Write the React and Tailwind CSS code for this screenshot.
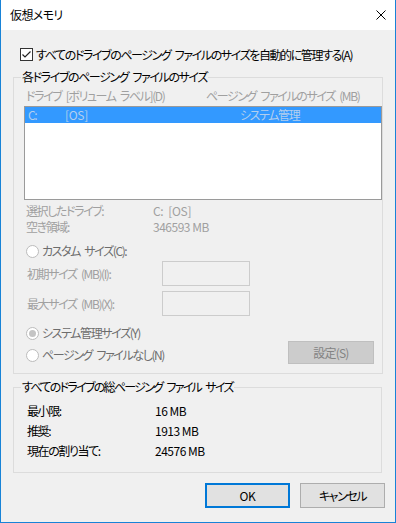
import React from 'react';

const Radio = ({ checked }) => (
  <span className="w-[13px] h-[13px] shrink-0 rounded-full border border-[#bcbcbc] bg-white flex items-center justify-center">
    {checked && <span className="w-[7px] h-[7px] rounded-full bg-[#c4c4c4]" />}
  </span>
);

const App = () => {
  return (
    <div className="w-[396px] h-[523px] flex flex-col bg-[#f0f0f0] border-x border-b border-[#1883d7] text-[12px] leading-[16px] tracking-[-1.4px] [word-spacing:3px] text-black font-['Noto_Sans_CJK_JP',sans-serif] [font-feature-settings:'palt']">
      {/* タイトルバー */}
      <div className="h-[30px] shrink-0 bg-white flex items-center justify-between pl-[9px] pr-[9px]">
        <span className="tracking-[-0.6px]">仮想メモリ</span>
        <svg width="10" height="10" viewBox="0 0 10 10">
          <path d="M0.5 0.5 L9.5 9.5 M9.5 0.5 L0.5 9.5" stroke="#000" strokeWidth="1" fill="none" />
        </svg>
      </div>

      <div className="flex flex-col px-[12px] pt-[18px]">
        <div className="h-[13px] flex items-center gap-[3px] pl-[7px]">
          <span className="w-[13px] h-[13px] shrink-0 border border-[#333333] bg-white flex items-center justify-center">
            <svg width="11" height="11" viewBox="0 0 11 11">
              <path d="M1.5 5.5 L4 8 L9.5 2.5" stroke="#222" strokeWidth="1.2" fill="none" />
            </svg>
          </span>
          <span className="whitespace-nowrap">すべてのドライブのページング ファイルのサイズを自動的に管理する(A)</span>
        </div>

        {/* 各ドライブ */}
        <fieldset className="mt-[8px] w-[369px] border border-[#dcdcdc] pb-[9px]">
          <legend className="ml-[7px] px-[1px] leading-[16px]">各ドライブのページング ファイルのサイズ</legend>
          <div className="flex flex-col pl-[10px] text-[#a0a0a0]">
            <div className="mt-[3px] h-[16px] flex pl-[2px] whitespace-nowrap">
              <span className="w-[180px]">ドライブ [ボリューム ラベル](D)</span>
              <span>ページング ファイルのサイズ (MB)</span>
            </div>
            <div className="mt-[2px] w-[358px] h-[94px] border border-[#9a9a9a] bg-white">
              <div className="h-[16px] bg-[#3399ff] flex items-center pl-[3px] text-[#b3cfee]">
                <span className="w-[37px]">C:</span>
                <span className="w-[175px] tracking-[-0.3px]">[OS]</span>
                <span>システム管理</span>
              </div>
            </div>
            <div className="mt-[3px] h-[16px] flex pl-[2px]">
              <span className="w-[127px]">選択したドライブ:</span>
              <span className="tracking-[-0.3px] [word-spacing:0px]">C:&nbsp;&nbsp;[OS]</span>
            </div>
            <div className="h-[16px] flex pl-[2px]">
              <span className="w-[127px]">空き領域:</span>
              <span className="tracking-[-0.5px] [word-spacing:0px]">346593 MB</span>
            </div>

            <div className="mt-[8px] h-[16px] flex items-center gap-[3px] pl-[2px] text-[#6d6d6d]">
              <Radio />
              <span>カスタム サイズ(C):</span>
            </div>
            <div className="mt-[2px] h-[25px] flex items-center pl-[3px]">
              <span className="w-[135px]">初期サイズ (MB)(I):</span>
              <div className="w-[88px] h-[25px] border border-[#cccccc]" />
            </div>
            <div className="mt-[5px] h-[25px] flex items-center pl-[3px]">
              <span className="w-[135px]">最大サイズ (MB)(X):</span>
              <div className="w-[88px] h-[25px] border border-[#cccccc]" />
            </div>

            <div className="mt-[9px] h-[16px] flex items-center gap-[3px] pl-[2px] text-[#6d6d6d]">
              <Radio checked />
              <span>システム管理サイズ(Y)</span>
            </div>
            <div className="h-[23px] flex items-end justify-between">
              <div className="mb-[1px] h-[16px] flex items-center gap-[3px] pl-[2px] text-[#6d6d6d]">
                <Radio />
                <span>ページング ファイルなし(N)</span>
              </div>
              <div className="mr-[8px] w-[86px] h-[23px] bg-[#cccccc] border border-[#bfbfbf] flex items-center justify-center text-[#838383] tracking-[-0.8px]">
                設定(S)
              </div>
            </div>
          </div>
        </fieldset>

        {/* 総ページング ファイル サイズ */}
        <fieldset className="mt-[5px] w-[369px] border border-[#dcdcdc] pb-[11px]">
          <legend className="ml-[7px] px-[1px] leading-[16px] tracking-[-1.7px]">すべてのドライブの総ページング ファイル サイズ</legend>
          <div className="mt-[6px] flex flex-col pl-[13px] leading-[20px]">
            <div className="h-[20px] flex">
              <span className="w-[128px]">最小限:</span>
              <span className="tracking-[-0.5px] [word-spacing:0px]">16 MB</span>
            </div>
            <div className="h-[20px] flex">
              <span className="w-[128px]">推奨:</span>
              <span className="tracking-[-0.5px] [word-spacing:0px]">1913 MB</span>
            </div>
            <div className="h-[20px] flex">
              <span className="w-[128px]">現在の割り当て:</span>
              <span className="tracking-[-0.5px] [word-spacing:0px]">24576 MB</span>
            </div>
          </div>
        </fieldset>

        <div className="mt-[10px] -mr-[2px] flex justify-end gap-[10px]">
          <button className="w-[85px] h-[25px] bg-[#e1e1e1] border-2 border-[#0078d7] flex items-center justify-center tracking-[-0.3px]">
            OK
          </button>
          <button className="w-[85px] h-[25px] bg-[#e1e1e1] border border-[#adadad] flex items-center justify-center">
            キャンセル
          </button>
        </div>
      </div>
    </div>
  );
};

export default App;
